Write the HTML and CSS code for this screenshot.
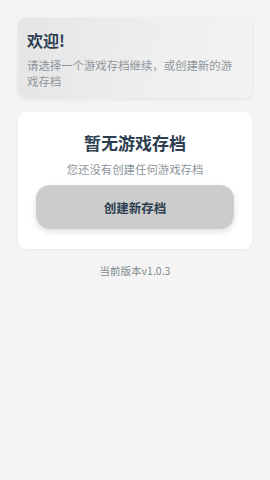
FILE: index.html
```html
<!DOCTYPE html>
<html lang="zh-CN">
<head>
<meta charset="utf-8">
<link rel="stylesheet" href="styles.css">
</head>
<body>
<main class="page">
  <section class="welcome">
    <h1 class="welcome-title">欢迎!</h1>
    <p class="welcome-text">请选择一个游戏存档继续，或创建新的游戏存档</p>
  </section>
  <section class="empty">
    <h2 class="empty-title">暂无游戏存档</h2>
    <p class="empty-text">您还没有创建任何游戏存档</p>
    <button class="create-btn" type="button">创建新存档</button>
  </section>
  <p class="version">当前版本v1.0.3</p>
</main>
</body>
</html>
```
FILE: styles.css
```css
html, body {
  margin: 0;
  padding: 0;
  background: #f4f4f4;
  font-family: "Noto Sans CJK SC", "Noto Sans", sans-serif;
}
.page {
  padding: 18px 18px;
  display: flex;
  flex-direction: column;
}
.welcome {
  border-radius: 8px;
  background: linear-gradient(100deg, #e5e5e5 0%, #eeeeee 55%, #f3f3f3 100%);
  box-shadow: 0 1px 4px rgba(0,0,0,0.08);
  padding: 11px 12px 9px 9px;
}
.welcome-title {
  margin: 0;
  font-size: 16px;
  line-height: 22px;
  font-weight: 700;
  color: #2c3e50;
}
.welcome-text {
  margin: 6px 0 0;
  font-size: 11.4px;
  line-height: 16px;
  color: #8e969c;
}
.empty {
  margin-top: 14px;
  background: #ffffff;
  border-radius: 8px;
  box-shadow: 0 1px 3px rgba(0,0,0,0.04);
  padding: 19px 18px 20px;
  display: flex;
  flex-direction: column;
  align-items: stretch;
  text-align: center;
}
.empty-title {
  margin: 0;
  font-size: 17px;
  line-height: 24px;
  font-weight: 700;
  color: #2c3e50;
}
.empty-text {
  margin: 6px 0 0;
  font-size: 11.4px;
  line-height: 16px;
  color: #8e969c;
}
.create-btn {
  margin-top: 8px;
  height: 44px;
  border: none;
  border-radius: 14px;
  background: #cccccc;
  box-shadow: 0 3px 6px rgba(0,0,0,0.12);
  font-family: inherit;
  font-size: 12.5px;
  font-weight: 700;
  color: #2c3e50;
}
.version {
  margin: 14px 0 0;
  text-align: center;
  font-size: 10.5px;
  line-height: 16px;
  color: #7f8c8d;
}
```
